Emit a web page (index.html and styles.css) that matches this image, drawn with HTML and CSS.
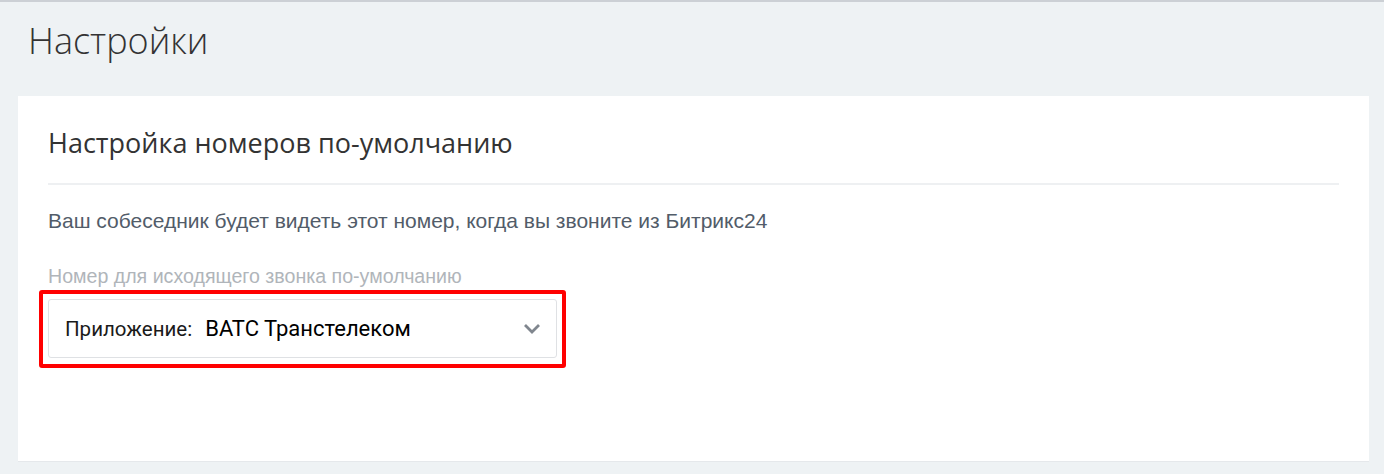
FILE: index.html
```html
<!DOCTYPE html>
<html lang="ru">
<head>
<meta charset="UTF-8">
<meta name="viewport" content="width=device-width, initial-scale=1.0">
<title>Настройки</title>
<link rel="stylesheet" href="styles.css">
</head>
<body>

<div class="page">
    <h1 class="page-title">Настройки</h1>

    <div class="card">
        <h2 class="card-title">Настройка номеров по-умолчанию</h2>

        <p class="card-text">Ваш собеседник будет видеть этот номер, когда вы звоните из Битрикс24</p>

        <div class="field">
            <label class="field-label">Номер для исходящего звонка по-умолчанию</label>
            <div class="highlight">
                <div class="select">
                    <span class="select-value"><span class="select-prefix">Приложение:</span>ВАТС Транстелеком</span>
                    <svg class="select-arrow" width="18" height="11" viewBox="0 0 18 11">
                        <path d="M2 2l7 7 7-7" fill="none" stroke="#80868e" stroke-width="2.8"/>
                    </svg>
                </div>
            </div>
        </div>
    </div>
</div>

</body>
</html>
```

FILE: styles.css
```css
/* Страница настроек */
body {
    margin: 0;
    padding: 0;
    background-color: #eef2f4;
    font-family: "Liberation Sans", Arial, sans-serif;
}

.page {
    border-top: 2px solid #ccd0d5;
    padding: 0 15px 12px 18px;
}

.page-title {
    margin: 0;
    padding: 14px 0 0 10px;
    height: 94px;
    box-sizing: border-box;
    font-family: "Open Sans", sans-serif;
    font-weight: 300;
    font-size: 36px;
    line-height: 50px;
    color: #333;
}

.card {
    background-color: #fff;
    padding: 22px 30px 0 30px;
    height: 366px;
    box-sizing: border-box;
    border-bottom: 1px solid #e5e8eb;
}

.card-title {
    margin: 0;
    padding-bottom: 15px;
    border-bottom: 2px solid #eef0f2;
    font-family: "Open Sans", sans-serif;
    font-weight: 400;
    font-size: 27px;
    line-height: 50px;
    color: #333;
}

.card-text {
    margin: 22px 0 0;
    font-size: 21px;
    line-height: 28px;
    color: #525c69;
}

.field {
    margin-top: 29px;
}

.field-label {
    display: block;
    font-size: 19.6px;
    line-height: 24px;
    color: #b0b5ba;
}

.highlight {
    display: inline-block;
    margin: 2px 0 0 -9px;
    padding: 5px 5px 6px;
    border: 4px solid #f00;
    border-radius: 3px;
}

.select {
    display: flex;
    align-items: center;
    justify-content: space-between;
    width: 509px;
    height: 59px;
    box-sizing: border-box;
    padding: 0 15px 0 16px;
    border: 1px solid #dfe1e4;
    border-radius: 3px;
}

.select-value {
    font-family: Roboto, sans-serif;
    font-size: 22px;
    color: #000;
}

.select-prefix {
    margin-right: 13px;
    font-size: 20.5px;
    color: #1a1a1a;
}
```
